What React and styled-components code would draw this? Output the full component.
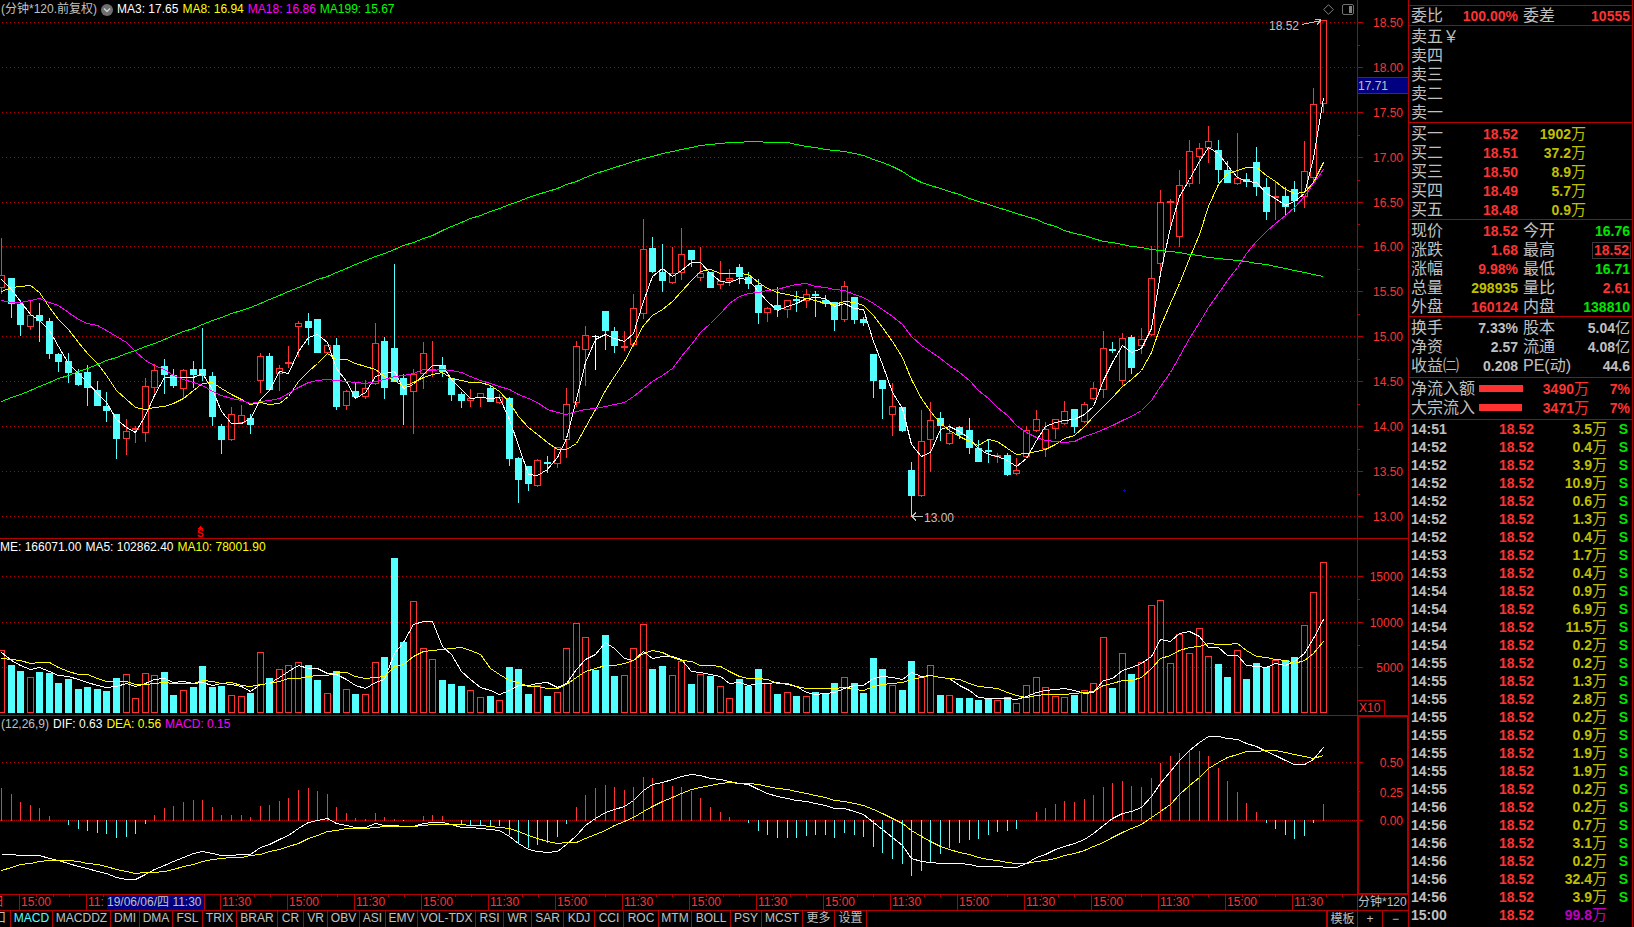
import React, { useState } from 'react'
import styled, { createGlobalStyle } from 'styled-components'

const RED = '#ff3232'
const LINE = '#b40000'
const CYAN = '#54ffff'
const SILVER = '#c0c0c0'
const YELLOW = '#ffff00'
const MAGENTA = '#ff00ff'
const GREEN = '#00ff00'

// kind, high, body top, body bottom, low
const candles = [
  ['r', 685, 792, 831, 843], ['c', 800, 800, 875, 915], ['c', 864, 876, 935, 967], ['r', 868, 907, 941, 947],
  ['c', 872, 906, 926, 984], ['c', 915, 926, 1021, 1033], ['c', 1016, 1021, 1044, 1070], ['c', 1016, 1041, 1073, 1102],
  ['c', 1062, 1073, 1108, 1111], ['c', 1050, 1070, 1116, 1168], ['c', 1096, 1122, 1168, 1168], ['c', 1128, 1168, 1185, 1214],
  ['c', 1191, 1191, 1263, 1321], ['r', 1208, 1241, 1265, 1306], ['r', 1227, 1232, 1236, 1277], ['r', 1088, 1111, 1248, 1269],
  ['r', 1047, 1066, 1118, 1128], ['c', 1033, 1053, 1079, 1134], ['c', 1062, 1079, 1111, 1116], ['r', 1062, 1066, 1121, 1142],
  ['c', 1041, 1062, 1079, 1116], ['c', 944, 1062, 1082, 1096], ['c', 1070, 1082, 1200, 1226], ['c', 1220, 1226, 1266, 1306],
  ['r', 1171, 1192, 1268, 1268], ['r', 1165, 1195, 1217, 1217], ['c', 1191, 1203, 1223, 1249], ['r', 1016, 1025, 1098, 1128],
  ['c', 1016, 1024, 1122, 1122], ['r', 1050, 1060, 1078, 1122], ['r', 998, 1042, 1046, 1059], ['r', 926, 930, 943, 1024],
  ['c', 901, 926, 944, 993], ['c', 918, 918, 1016, 1018], ['r', 993, 993, 1018, 1018], ['c', 975, 993, 1171, 1180],
  ['r', 1122, 1126, 1170, 1177], ['c', 1102, 1125, 1142, 1147], ['r', 1094, 1117, 1144, 1147], ['r', 929, 988, 1107, 1107],
  ['c', 972, 981, 1116, 1148], ['c', 760, 1001, 1099, 1099], ['c', 1076, 1090, 1139, 1223], ['r', 1062, 1077, 1130, 1246],
  ['r', 984, 1017, 1078, 1116], ['r', 981, 1063, 1067, 1085], ['c', 1027, 1050, 1070, 1085], ['c', 1088, 1088, 1139, 1154],
  ['c', 1130, 1136, 1154, 1174], ['r', 1119, 1146, 1156, 1168], ['r', 1132, 1132, 1145, 1168], ['c', 1111, 1116, 1159, 1159],
  ['r', 1134, 1143, 1161, 1161], ['c', 1142, 1145, 1321, 1341], ['c', 1315, 1318, 1381, 1447], ['c', 1341, 1341, 1395, 1413],
  ['r', 1321, 1324, 1399, 1399], ['c', 1312, 1329, 1334, 1361], ['r', 1286, 1287, 1336, 1344], ['r', 1116, 1163, 1267, 1315],
  ['r', 981, 996, 1161, 1168], ['r', 938, 965, 1009, 1108], ['w', 964, 968, 968, 1067], ['c', 895, 895, 952, 1007],
  ['c', 941, 952, 998, 1016], ['r', 952, 996, 1000, 1010], ['r', 846, 887, 994, 998], ['r', 630, 717, 905, 915],
  ['c', 682, 716, 785, 788], ['c', 702, 785, 811, 840], ['r', 711, 787, 815, 815], ['r', 656, 732, 787, 803],
  ['c', 719, 719, 748, 768], ['r', 711, 787, 802, 806], ['c', 785, 785, 829, 831], ['r', 751, 809, 822, 831],
  ['r', 774, 801, 811, 820], ['c', 760, 768, 797, 817], ['c', 785, 797, 817, 834], ['c', 803, 820, 901, 932],
  ['r', 883, 887, 902, 924], ['c', 826, 878, 892, 912], ['r', 864, 864, 894, 912], ['c', 837, 860, 865, 898],
  ['r', 834, 847, 867, 883], ['c', 837, 846, 851, 912], ['c', 851, 863, 875, 883], ['c', 869, 869, 921, 952],
  ['r', 811, 824, 923, 926], ['c', 857, 857, 921, 932], ['c', 912, 918, 929, 938], ['c', 1021, 1021, 1096, 1145],
  ['c', 1093, 1093, 1119, 1208], ['r', 1102, 1169, 1196, 1252], ['c', 1171, 1171, 1240, 1243], ['c', 1329, 1352, 1427, 1486],
  ['r', 1182, 1270, 1428, 1428], ['r', 1157, 1209, 1267, 1356], ['c', 1186, 1203, 1226, 1269], ['r', 1220, 1247, 1278, 1278],
  ['c', 1226, 1230, 1252, 1263], ['c', 1203, 1237, 1289, 1306], ['c', 1266, 1289, 1329, 1329], ['c', 1266, 1295, 1302, 1332],
  ['r', 1304, 1309, 1313, 1332], ['c', 1303, 1309, 1367, 1372], ['r', 1318, 1353, 1365, 1365], ['r', 1226, 1238, 1316, 1316],
  ['r', 1180, 1206, 1242, 1242], ['r', 1214, 1236, 1294, 1312], ['r', 1206, 1206, 1236, 1260], ['r', 1154, 1183, 1221, 1221],
  ['c', 1177, 1177, 1231, 1246], ['r', 1157, 1163, 1216, 1216], ['r', 1099, 1117, 1150, 1150], ['r', 952, 1002, 1124, 1142],
  ['c', 984, 1004, 1010, 1016], ['r', 958, 973, 1098, 1105], ['c', 964, 972, 1059, 1076], ['r', 944, 976, 997, 1018],
  ['r', 708, 801, 966, 966], ['r', 547, 582, 761, 780], ['r', 575, 579, 583, 656], ['r', 489, 533, 684, 708],
  ['r', 403, 435, 530, 535], ['r', 414, 427, 453, 527], ['r', 363, 407, 428, 466], ['c', 403, 432, 489, 527],
  ['c', 463, 489, 529, 529], ['r', 383, 514, 530, 530], ['c', 498, 515, 524, 538], ['c', 423, 466, 538, 564],
  ['c', 512, 538, 610, 633], ['r', 521, 565, 569, 633], ['c', 538, 564, 598, 620], ['c', 521, 544, 578, 610],
  ['r', 406, 493, 569, 596], ['r', 253, 300, 514, 524], ['r', 59, 59, 300, 324],
]

const volumes = [
  361, 405, 423, 442, 426, 429, 459, 447, 477, 471, 477, 483, 444, 433, 505, 430, 436, 426, 495, 481, 471, 408, 471, 468,
  496, 499, 489, 367, 444, 418, 406, 397, 405, 450, 490, 423, 478, 492, 493, 397, 381, 84, 336, 214, 355, 388, 450, 462,
  468, 481, 502, 498, 511, 411, 417, 492, 466, 498, 487, 355, 280, 322, 420, 315, 438, 436, 355, 283, 417, 408, 436, 394,
  462, 433, 438, 469, 505, 447, 468, 417, 460, 492, 487, 498, 499, 486, 489, 459, 442, 459, 489, 384, 417, 466, 480, 393,
  438, 406, 495, 496, 504, 504, 510, 506, 510, 501, 520, 466, 442, 472, 499, 502, 495, 481, 460, 322, 474, 370, 432, 397,
  226, 211, 401, 313, 370, 295, 379, 402, 441, 361, 447, 399, 412, 390, 390, 381, 286, 187, 97,
]

const MACD_ZERO = 871
const macd = [
  774, 792, 816, 825, 834, 858, 871, 885, 897, 903, 909, 912, 924, 921, 912, 882, 855, 834, 828, 816, 810, 810, 831, 855,
  855, 855, 861, 828, 825, 813, 804, 780, 774, 783, 792, 831, 849, 864, 868, 849, 861, 867, 874, 871, 858, 855, 858, 871,
  885, 886, 886, 889, 888, 915, 942, 954, 945, 939, 921, 882, 831, 795, 774, 765, 771, 780, 771, 741, 744, 756, 768, 771,
  783, 804, 831, 846, 861, 871, 879, 903, 915, 924, 924, 924, 918, 915, 915, 924, 909, 915, 921, 951, 969, 987, 1002, 1038,
  1023, 996, 972, 954, 939, 930, 927, 915, 906, 903, 897, 871, 846, 834, 822, 813, 816, 807, 795, 771, 759, 753, 768, 771,
  744, 699, 678, 669, 660, 663, 678, 714, 753, 786, 819, 846, 879, 897, 915, 927, 918, 879, 822,
]

const deaPoints = [
  [0, 1021], [2, 1003], [5, 992], [7, 992], [9, 999], [11, 1010], [13, 1024], [14, 1029], [16, 1027], [17, 1024],
  [19, 1010], [21, 994], [23, 985], [25, 982], [27, 973], [29, 958], [31, 940], [32, 926], [34, 905], [36, 896],
  [38, 895], [40, 890], [43, 889], [45, 884], [47, 883], [49, 885], [51, 889], [53, 896], [54, 905], [56, 926],
  [58, 940], [60, 937], [62, 914], [64, 887], [66, 862], [68, 828], [70, 801], [72, 777], [74, 765], [76, 758],
  [79, 762], [81, 774], [84, 791], [87, 810], [90, 827], [92, 850], [94, 880], [95, 901], [96, 919], [97, 935],
  [98, 949], [100, 967], [102, 982], [104, 992], [106, 1000], [107, 999], [109, 991], [111, 977], [113, 961],
  [115, 937], [117, 908], [119, 882], [121, 845], [122, 822], [123, 793], [124, 766], [125, 741], [126, 715],
  [127, 697], [128, 683], [129, 672], [130, 665], [132, 661], [133, 662], [135, 674], [137, 685], [138, 677],
]

const ma199Points = [
  [0, 1155], [4, 1112], [7, 1079], [12, 1028], [15, 998], [21, 933], [27, 873], [31, 827], [35, 783], [41, 717],
  [45, 676], [47, 651], [50, 619], [54, 578], [58, 542], [62, 499], [66, 464], [70, 435], [73, 418], [76, 409],
  [79, 407], [82, 411], [85, 425], [88, 436], [90, 448], [92, 467], [94, 493], [96, 525], [99, 551], [103, 588],
  [107, 622], [111, 663], [115, 694], [120, 717], [122, 722], [125, 736], [128, 746], [132, 760], [134, 771],
  [137, 790], [138, 796],
]

const xOf = (i) => Math.round(1 + 9.58 * i)
const priceY = (v) => Math.round(v / 2.877 - 0.4)
const lowerY = (v) => Math.floor(530 + v / 3)

const average = (values, span, seed) =>
  values.map((_, i) => {
    if (i < span - 1) return seed[i]
    const part = values.slice(i - span + 1, i + 1)
    return part.reduce((a, b) => a + b, 0) / span
  })

const fill = (points) =>
  macd.map((_, i) => {
    const n = points.findIndex((p) => p[0] >= i)
    const [x1, y1] = points[n]
    if (x1 === i) return y1
    const [x0, y0] = points[n - 1]
    return y0 + ((y1 - y0) * (i - x0)) / (x1 - x0)
  })

const toPoints = (values, scale) => values.map((v, i) => `${xOf(i) + 0.5},${scale(v) + 0.5}`).join(' ')

const closes = candles.map(([kind, , top, bottom]) => (kind === 'c' ? bottom : top))
const ma3 = average(closes, 3, [805, 832])
const ma8 = average(closes, 8, [838, 827, 825, 822, 840, 885, 918])
const ma18 = average(closes, 18, [864, 870, 871, 865, 858, 870, 880, 900, 918, 929, 937, 950, 967, 984, 1010, 1037, 1052])
const ma199 = fill(ma199Points)
const vol5 = average(volumes, 5, [368, 390, 405, 418])
const vol10 = average(volumes, 10, [385, 388, 392, 400, 398, 398, 412, 424, 432])
const dea = fill(deaPoints)
const dif = dea.map((v, i) => v + (macd[i] - MACD_ZERO) / 2)

const priceGrid = [
  [22, '18.50'], [67, '18.00'], [112, '17.50'], [157, '17.00'], [202, '16.50'], [246, '16.00'],
  [291, '15.50'], [336, '15.00'], [381, '14.50'], [426, '14.00'], [471, '13.50'], [516, '13.00'],
]
const volumeGrid = [[576, '15000'], [622, '10000'], [667, '5000']]

const tabs = [
  ['口', 11], ['MACD', 42], ['MACDDZ', 58], ['DMI', 29], ['DMA', 33], ['FSL', 30], ['TRIX', 34], ['BRAR', 41],
  ['CR', 26], ['VR', 24], ['OBV', 32], ['ASI', 26], ['EMV', 32], ['VOL-TDX', 58], ['RSI', 28], ['WR', 28],
  ['SAR', 32], ['KDJ', 31], ['CCI', 29], ['ROC', 35], ['MTM', 33], ['BOLL', 39], ['PSY', 31], ['MCST', 41],
  ['更多', 32], ['设置', 32],
]

// the cursor date covers the tail of the second label and the whole third one
const times = Array.from({ length: 20 }, (_, i) => {
  if (i === 1) return '11:'
  if (i === 2) return ''
  return i % 2 ? '11:30' : '15:00'
})

const asks = ['卖五￥', '卖四', '卖三', '卖二', '卖一']
const bids = [
  ['买一', '18.52', '1902'], ['买二', '18.51', '37.2'], ['买三', '18.50', '8.9'], ['买四', '18.49', '5.7'], ['买五', '18.48', '0.9'],
]
const quotes = [
  ['现价', '18.52', 'up', '今开', '16.76', 'down'],
  ['涨跌', '1.68', 'up', '最高', '18.52', 'up', true],
  ['涨幅', '9.98%', 'up', '最低', '16.71', 'down'],
  ['总量', '298935', 'vol', '量比', '2.61', 'up'],
  ['外盘', '160124', 'up', '内盘', '138810', 'down'],
]
const basics = [
  ['换手', '7.33%', '', '股本', '5.04亿', ''],
  ['净资', '2.57', '', '流通', '4.08亿', ''],
  ['收益㈡', '0.208', '', 'PE(动)', '44.6', ''],
]
const flows = [['净流入额', 44, '3490'], ['大宗流入', 43, '3471']]

const ticks = [
  ['14:51', '3.5'], ['14:52', '0.4'], ['14:52', '3.9'], ['14:52', '10.9'], ['14:52', '0.6'], ['14:52', '1.3'],
  ['14:52', '0.4'], ['14:53', '1.7'], ['14:53', '0.4'], ['14:54', '0.9'], ['14:54', '6.9'], ['14:54', '11.5'],
  ['14:54', '0.2'], ['14:55', '0.2'], ['14:55', '1.3'], ['14:55', '2.8'], ['14:55', '0.2'], ['14:55', '0.9'],
  ['14:55', '1.9'], ['14:55', '1.9'], ['14:55', '0.2'], ['14:56', '0.2'], ['14:56', '0.7'], ['14:56', '3.1'],
  ['14:56', '0.2'], ['14:56', '32.4'], ['14:56', '3.9'], ['15:00', '99.8'],
]

const tones = { up: RED, down: '#00e600', vol: '#c0c000', big: '#c000c0' }

const GridLines = ({ rows }) => rows.map(([y]) => (
  <line key={y} x1="2" x2="1357" y1={y + 0.5} y2={y + 0.5} stroke={LINE} strokeDasharray="1 3" />
))

const Curve = ({ values, scale, color }) => (
  <polyline points={toPoints(values, scale)} fill="none" stroke={color} />
)

const Candle = ({ i, data }) => {
  const [kind, high, top, bottom, low] = data
  const x = xOf(i)
  const [h, t, b, l] = [high, top, bottom, low].map(priceY)
  const color = kind === 'r' ? RED : kind === 'c' ? CYAN : '#ffffff'
  if (kind === 'r' && b - t > 2) {
    return (
      <g stroke={color} fill="none">
        <line x1={x + 0.5} x2={x + 0.5} y1={h} y2={t} />
        <line x1={x + 0.5} x2={x + 0.5} y1={b} y2={l + 1} />
        <rect x={x - 2.5} y={t + 0.5} width="6" height={b - t - 1} />
      </g>
    )
  }
  return (
    <g fill={color}>
      <rect x={x} y={h} width="1" height={l - h} />
      <rect x={x - 3} y={t} width="7" height={kind === 'w' ? 1 : Math.max(b - t, 2)} />
    </g>
  )
}

const PriceChart = () => (
  <Plot viewBox="0 18 1357 520" preserveAspectRatio="xMaxYMin slice" $height={520}>
    <GridLines rows={priceGrid} />
    {candles.map((c, i) => <Candle key={i} i={i} data={c} />)}
    <Curve values={ma3} scale={priceY} color="#ffffff" />
    <Curve values={ma8} scale={priceY} color={YELLOW} />
    <Curve values={ma18} scale={priceY} color={MAGENTA} />
    <Curve values={ma199} scale={priceY} color={GREEN} />
    <text x="1269" y="30" fill={SILVER}>18.52</text>
    <path d="M1302 24.5 L1321 20.5 M1315 19.5 H1321 M1317 24.5 L1321 20.5" stroke={SILVER} fill="none" />
    <text x="924" y="522" fill={SILVER}>13.00</text>
    <path d="M923 516.5 H912 M916 512.5 L912 516.5 L916 520.5" stroke={SILVER} fill="none" />
    <path d="M198 529 L200.5 526 L203 529 Z" fill="#ff0000" />
    <Mark x="197" y="537">S</Mark>
    <path d="M1123 490.5 H1126 M1124.5 489 V492" stroke="#0000ff" />
  </Plot>
)

const VolumeChart = () => (
  <Plot viewBox="0 556 1357 159" preserveAspectRatio="xMaxYMin slice" $height={159}>
    <GridLines rows={volumeGrid} />
    {volumes.map((v, i) => {
      const x = xOf(i)
      const y = lowerY(v)
      return candles[i][0] === 'r'
        ? <rect key={i} x={x - 2.5} y={y + 0.5} width="6" height={712 - y} stroke={RED} fill="none" />
        : <rect key={i} x={x - 3} y={y} width="7" height={713 - y} fill={CYAN} />
    })}
    <Curve values={vol5} scale={lowerY} color="#ffffff" />
    <Curve values={vol10} scale={lowerY} color={YELLOW} />
  </Plot>
)

const MacdChart = () => (
  <Plot viewBox="0 733 1357 161" preserveAspectRatio="xMaxYMin slice" $height={161}>
    <GridLines rows={[[762]]} />
    <line x1="0" x2="1357" y1="820.5" y2="820.5" stroke={LINE} strokeDasharray="1 1" />
    {macd.map((v, i) => {
      if (v === MACD_ZERO) return null
      const y = lowerY(v)
      const up = v < MACD_ZERO
      return <rect key={i} x={xOf(i)} y={up ? y : 820} width="1" height={Math.max(up ? 821 - y : y - 820, 1)} fill={up ? RED : CYAN} />
    })}
    <Curve values={dif} scale={lowerY} color="#ffffff" />
    <Curve values={dea} scale={lowerY} color={YELLOW} />
  </Plot>
)

const AxisLabels = ({ rows }) => rows.map(([y, label]) => (
  <g key={label}>
    <line x1="0" x2="5" y1={y + 0.5} y2={y + 0.5} stroke={LINE} />
    <text x="45" y={y + 5} textAnchor="end" fill={RED}>{label}</text>
  </g>
))

const MinorTicks = ({ rows }) => rows.map((y) => (
  <line key={y} x1="0" x2="2" y1={y + 0.5} y2={y + 0.5} stroke={LINE} />
))

const QuoteTable = ({ rows, label }) => (
  <Table aria-label={label}>
    <colgroup><col width="48" /><col width="59" /><col width="56" /><col /></colgroup>
    <tbody>
      {rows.map(([name, value, tone, name2, value2, tone2, boxed]) => (
        <tr key={name}>
          <Name scope="row">{name}</Name>
          <Value $tone={tone}>{value}</Value>
          <Name scope="row" $second>{name2}</Name>
          <Value $tone={tone2}>{boxed ? <Boxed>{value2}</Boxed> : <Unit text={value2} />}</Value>
        </tr>
      ))}
    </tbody>
  </Table>
)

const Unit = ({ text }) => {
  const match = text.match(/^([\d.]+)([万亿])$/)
  return match ? <>{match[1]}<Cjk>{match[2]}</Cjk></> : text
}

const App = () => {
  const [active, setActive] = useState('MACD')

  return (
    <Page>
      <GlobalStyle />
      <Main>
        <Panel>
          <Chart>
            <Legend $top>
              <span>(分钟*120.前复权)</span>
              <IconButton aria-label="展开">
                <svg width="12" height="12" viewBox="0 0 12 12">
                  <circle cx="6" cy="6" r="6" fill="#6e6e6e" />
                  <path d="M3 4.5 L6 7.5 L9 4.5" fill="none" stroke="#d0d0d0" strokeWidth="1.4" />
                </svg>
              </IconButton>
              <Reading $color="#ffffff">MA3: 17.65</Reading>
              <Reading $color={YELLOW}>MA8: 16.94</Reading>
              <Reading $color={MAGENTA}>MA18: 16.86</Reading>
              <Reading $color={GREEN}>MA199: 15.67</Reading>
              <Tools>
                <IconButton aria-label="标记">
                  <svg width="11" height="11" viewBox="0 0 11 11">
                    <path d="M5.5 0.7 L10.3 5.5 L5.5 10.3 L0.7 5.5 Z" fill="none" stroke="#808080" />
                  </svg>
                </IconButton>
                <IconButton aria-label="侧栏">
                  <svg width="12" height="11" viewBox="0 0 12 11">
                    <rect x="0.5" y="0.5" width="11" height="10" rx="1.5" fill="none" stroke="#707070" />
                    <rect x="7" y="2" width="3" height="7" fill="#808080" />
                  </svg>
                </IconButton>
              </Tools>
            </Legend>
            <PriceChart />
          </Chart>
          <Axis>
            <svg width="50" height="538" viewBox="0 0 50 538">
              <AxisLabels rows={priceGrid} />
              <MinorTicks rows={[45, 135, 180, 224, 269, 314, 359, 404, 449, 494]} />
              <rect x="0" y="77" width="50" height="17" fill={LINE} />
              <rect x="0" y="78" width="50" height="15" fill="#000080" />
              <text x="0" y="90" fill={SILVER}>17.71</text>
            </svg>
          </Axis>
        </Panel>

        <Panel>
          <Chart>
            <Legend $flush>
              <Reading $color="#ffffff">ME: 166071.00</Reading>
              <Reading $color="#ffffff">MA5: 102862.40</Reading>
              <Reading $color={YELLOW}>MA10: 78001.90</Reading>
            </Legend>
            <VolumeChart />
          </Chart>
          <Axis>
            <svg width="50" height="176" viewBox="0 539 50 176">
              <AxisLabels rows={volumeGrid} />
              <MinorTicks rows={[599, 645]} />
              <path d="M0 700.5 H26.5 V715" fill="none" stroke={LINE} />
              <text x="1" y="712" fill={RED}>X10</text>
            </svg>
          </Axis>
        </Panel>

        <Panel>
          <Chart>
            <Legend>
              <span>(12,26,9)</span>
              <Reading $color="#ffffff">DIF: 0.63</Reading>
              <Reading $color={YELLOW}>DEA: 0.56</Reading>
              <Reading $color={MAGENTA}>MACD: 0.15</Reading>
            </Legend>
            <MacdChart />
          </Chart>
          <Axis>
            <svg width="50" height="178" viewBox="0 716 50 178">
              <AxisLabels rows={[[762, '0.50'], [820, '0.00']]} />
              <text x="45" y="797" textAnchor="end" fill={RED}>0.25</text>
              <MinorTicks rows={[791]} />
              <rect x="0.5" y="716.5" width="49" height="177" fill="none" stroke={LINE} />
            </svg>
          </Axis>
        </Panel>

        <Bar>
          <TimeLine>
            <TimeHead>日</TimeHead>
            {times.map((t, i) => <Time key={i}>{t}</Time>)}
            <Cursor>19/06/06/四 11:30</Cursor>
          </TimeLine>
          <Period>分钟*120</Period>
        </Bar>

        <Bar $last>
          <Tabs>
            {tabs.map(([name, width]) => (
              <Tab key={name} $width={width} $active={name === active} onClick={() => setActive(name)}>{name}</Tab>
            ))}
          </Tabs>
          <Template>模板</Template>
          <Zoom aria-label="放大">+</Zoom>
          <Zoom aria-label="缩小">−</Zoom>
        </Bar>
      </Main>

      <Side>
        <Block $first>
          <QuoteTable label="委比" rows={[['委比', '100.00%', 'up', '委差', '10555', 'up']]} />
        </Block>
        <Block>
          <Table aria-label="卖盘">
            <tbody>
              {asks.map((name) => <tr key={name}><Name scope="row">{name}</Name></tr>)}
            </tbody>
          </Table>
        </Block>
        <Block>
          <Table aria-label="买盘">
            <colgroup><col width="48" /><col width="59" /><col width="68" /><col /></colgroup>
            <tbody>
              {bids.map(([name, price, amount]) => (
                <tr key={name}>
                  <Name scope="row">{name}</Name>
                  <Value $tone="up">{price}</Value>
                  <Value $tone="vol">{amount}<Cjk>万</Cjk></Value>
                  <td />
                </tr>
              ))}
            </tbody>
          </Table>
        </Block>
        <Block><QuoteTable label="行情" rows={quotes} /></Block>
        <Block $loose><QuoteTable label="基本面" rows={basics} /></Block>
        <Block $loose>
          <Table aria-label="资金流向">
            <colgroup><col width="68" /><col width="46" /><col width="64" /><col /></colgroup>
            <tbody>
              {flows.map(([name, width, amount]) => (
                <tr key={name}>
                  <Name scope="row">{name}</Name>
                  <td><Meter style={{ width }} /></td>
                  <Value $tone="up">{amount}<Cjk>万</Cjk></Value>
                  <Value $tone="up">7%</Value>
                </tr>
              ))}
            </tbody>
          </Table>
        </Block>
        <Table aria-label="分笔成交" $dense>
          <colgroup><col width="48" /><col width="75" /><col width="73" /><col /></colgroup>
          <tbody>
            {ticks.map(([time, amount], i) => {
              const closing = i === ticks.length - 1
              return (
                <tr key={i}>
                  <Clock>{time}</Clock>
                  <Value $tone="up">18.52</Value>
                  <Value $tone={closing ? 'big' : 'vol'}>{amount}<Cjk>万</Cjk></Value>
                  <Flag>{closing ? '' : 'S'}</Flag>
                </tr>
              )
            })}
          </tbody>
        </Table>
      </Side>
    </Page>
  )
}

export default App


const GlobalStyle = createGlobalStyle`
  body {
    margin: 0;
    background: #000000;
  }
  * {
    box-sizing: border-box;
  }
  button {
    margin: 0;
    padding: 0;
    border: none;
    background: none;
    color: inherit;
    font: inherit;
    cursor: pointer;
  }
`;

const Page = styled.div`
  display: flex;
  min-height: 100vh;
  background: #000000;
  color: ${SILVER};
  font-family: "Liberation Sans", "Noto Sans CJK SC", sans-serif;
  font-size: 12px;
`;

const Main = styled.main`
  flex: 1;
  min-width: 0;
  display: flex;
  flex-direction: column;
`;

const Panel = styled.section`
  display: flex;
  border-bottom: 1px solid ${LINE};
`;

const Chart = styled.div`
  flex: 1;
  min-width: 0;
`;

const Legend = styled.div`
  display: flex;
  align-items: center;
  gap: 4px;
  height: ${(props) => props.$top ? '18px' : '17px'};
  padding-top: ${(props) => props.$top ? '1px' : '0'};
  padding-left: ${(props) => props.$flush ? '0' : '1px'};
  line-height: 17px;
  white-space: nowrap;
`;

const Reading = styled.span`
  color: ${(props) => props.$color};
`;

const Tools = styled.div`
  display: flex;
  align-items: center;
  gap: 8px;
  margin-left: auto;
  padding-right: 3px;
`;

const IconButton = styled.button`
  display: flex;
`;

const Plot = styled.svg`
  display: block;
  width: 100%;
  height: ${(props) => props.$height}px;
  shape-rendering: crispEdges;
`;

const Mark = styled.text`
  fill: #ff0000;
  font-size: 10px;
  font-weight: bold;
`;

const Axis = styled.div`
  flex: 0 0 51px;
  border-left: 1px solid ${LINE};

  svg {
    display: block;
    shape-rendering: crispEdges;
  }
`;

const Bar = styled.div`
  display: flex;
  height: 16px;
  line-height: 15px;
  white-space: nowrap;
  border-bottom: ${(props) => props.$last ? 'none' : `1px solid ${LINE}`};
`;

const TimeLine = styled.div`
  position: relative;
  flex: 1;
  min-width: 0;
  display: flex;
  overflow: hidden;
  color: ${RED};
`;

const TimeHead = styled.div`
  flex: 0 0 19px;
  min-width: 0;
  display: flex;
  justify-content: flex-end;
  padding-right: 15px;
`;

const Time = styled.div`
  flex: 0 0 67px;
  padding-left: 1px;
  border-left: 1px solid ${LINE};
  background:
    linear-gradient(${LINE}, ${LINE}) 16px 0 / 1px 2px no-repeat,
    linear-gradient(${LINE}, ${LINE}) 33px 0 / 1px 2px no-repeat,
    linear-gradient(${LINE}, ${LINE}) 49px 0 / 1px 2px no-repeat;
`;

const Cursor = styled.div`
  position: absolute;
  top: 0;
  left: 107px;
  width: 98px;
  background: #000080;
  border-right: 1px solid ${LINE};
  color: ${SILVER};
`;

const Period = styled.div`
  flex: 0 0 51px;
  border-left: 1px solid ${LINE};
`;

const Tabs = styled.nav`
  flex: 1;
  min-width: 0;
  display: flex;
  overflow: hidden;
`;

const Tab = styled.button`
  flex: 0 0 ${(props) => props.$width}px;
  min-width: 0;
  display: flex;
  justify-content: ${(props) => props.$width < 20 ? 'flex-end' : 'center'};
  padding-right: ${(props) => props.$width < 20 ? '4px' : '0'};
  border-right: 1px solid ${LINE};
  color: ${(props) => props.$active ? CYAN : SILVER};
`;

const Template = styled.button`
  flex: 0 0 31px;
  border-left: 2px solid ${LINE};
`;

const Zoom = styled.button`
  flex: 0 0 25px;
  border-left: 1px solid ${LINE};

  &:last-child {
    flex-basis: 26px;
  }
`;

const Side = styled.aside`
  flex: 0 0 225px;
  margin-right: 1px;
  padding-top: 5px;
  border-left: 1px solid ${LINE};
  border-right: 1px solid ${LINE};
  font-size: 14px;
`;

const Block = styled.div`
  padding-top: ${(props) => props.$first ? '0' : '1px'};
  padding-bottom: ${(props) => props.$loose ? '2px' : '0'};
  border-top: ${(props) => props.$first ? `1px solid ${LINE}` : 'none'};
  border-bottom: 1px solid ${LINE};
`;

const Table = styled.table`
  width: 100%;
  table-layout: fixed;
  border-collapse: separate;
  border-spacing: 0;
  padding: 0 2px;

  th, td {
    height: ${(props) => props.$dense ? '18px' : '19px'};
    padding: 0;
    line-height: 18px;
    white-space: nowrap;
  }
`;

const Name = styled.th`
  && {
    padding-left: ${(props) => props.$second ? '5px' : '0'};
  }
  font-family: "Liberation Sans", "Noto Sans CJK SC", sans-serif;
  font-size: 16px;
  font-weight: normal;
  text-align: left;
`;

const Value = styled.td`
  color: ${(props) => tones[props.$tone] || SILVER};
  font-weight: bold;
  text-align: right;
`;

const Cjk = styled.span`
  font-size: 15px;
  font-weight: normal;
  line-height: 1;
`;

const Boxed = styled.span`
  display: inline-block;
  line-height: 15px;
  padding: 0 1px;
  outline: 1px solid #383838;
`;

const Meter = styled.div`
  height: 7px;
  background: ${RED};
`;

const Clock = styled.td`
  font-weight: bold;
`;

const Flag = styled.td`
  && {
    padding-right: 2px;
  }
  color: #00e600;
  font-weight: bold;
  text-align: right;
`;
